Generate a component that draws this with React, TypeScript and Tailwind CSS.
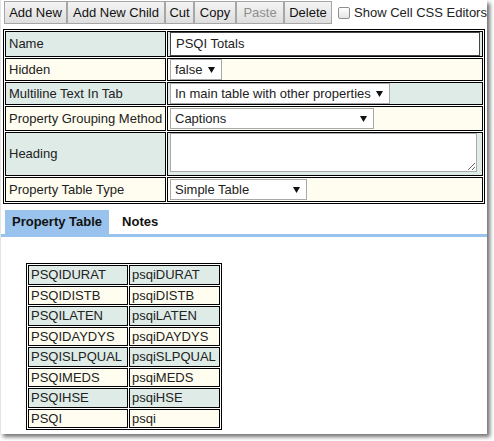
import { ReactNode } from "react";

const TEAL = "bg-[#deebe7]";
const CREAM = "bg-[#fffdef]";

function Arrow() {
  return (
    <svg width="7" height="6" viewBox="0 0 7 6" className="shrink-0">
      <polygon points="0,0 7,0 3.5,6" fill="#111" />
    </svg>
  );
}

function FakeSelect({ value, width }: { value: string; width: string }) {
  return (
    <div
      className={`${width} h-[21px] flex items-center justify-between pl-[4px] pr-[6px] bg-white border border-[#a9a9a9] text-[#222] leading-none whitespace-nowrap`}
    >
      <span>{value}</span>
      <Arrow />
    </div>
  );
}

function Row({
  label,
  bg,
  h,
  top,
  children,
}: {
  label: string;
  bg: string;
  h: string;
  top?: boolean;
  children: ReactNode;
}) {
  return (
    <tr>
      <td className={`${bg} ${h} border border-black pl-[3px] text-[#222] align-middle whitespace-nowrap`}>
        {label}
      </td>
      <td className={`${bg} ${h} border border-black px-[2px] ${top ? "align-top pt-0" : "align-middle"}`}>
        {children}
      </td>
    </tr>
  );
}

const buttons = [
  { label: "Add New", w: "w-[63px]" },
  { label: "Add New Child", w: "w-[98px]" },
  { label: "Cut", w: "w-[29px]" },
  { label: "Copy", w: "w-[42px]" },
  { label: "Paste", w: "w-[48px]", disabled: true },
  { label: "Delete", w: "w-[48px]" },
];

const vars = [
  ["PSQIDURAT", "psqiDURAT"],
  ["PSQIDISTB", "psqiDISTB"],
  ["PSQILATEN", "psqiLATEN"],
  ["PSQIDAYDYS", "psqiDAYDYS"],
  ["PSQISLPQUAL", "psqiSLPQUAL"],
  ["PSQIMEDS", "psqiMEDS"],
  ["PSQIHSE", "psqiHSE"],
  ["PSQI", "psqi"],
];

export default function App() {
  return (
    <div className="w-[494px] h-[441px] bg-white">
      <div className="w-[487px] h-[434px] bg-white overflow-hidden border-l border-[#e4e4e4] shadow-[3px_3px_4px_rgba(0,0,0,0.55)] font-['Liberation_Sans',Arial,sans-serif] text-[13px] text-[#222]">
        {/* toolbar */}
        <div className="flex items-center pl-[3px] pt-[1px] whitespace-nowrap">
          <div className="flex shrink-0">
            {buttons.map((b) => (
              <div
                key={b.label}
                className={`${b.w} h-[23px] flex items-center justify-center border border-[#a6a6a6] bg-gradient-to-b from-[#f4f4f4] to-[#dedede] ${
                  b.disabled ? "text-[#8f8f8f]" : "text-[#111]"
                }`}
              >
                {b.label}
              </div>
            ))}
          </div>
          <input
            type="checkbox"
            className="appearance-none shrink-0 ml-[6px] w-[12px] h-[12px] rounded-[2px] border border-[#8f8f8f] bg-gradient-to-b from-white to-[#e4e4e4]"
          />
          <span className="ml-[4px] text-[#222]">Show Cell CSS Editors</span>
        </div>

        {/* properties table */}
        <table className="mt-[5px] ml-[2px] border-separate border-spacing-[1px] border border-black w-[482px] table-fixed">
          <colgroup>
            <col className="w-[161px]" />
            <col />
          </colgroup>
          <tbody>
            <Row label="Name" bg={TEAL} h="h-[26px]">
              <div className="h-[24px] flex items-center px-[5px] bg-white border border-[#454545] text-[#222]">
                PSQI Totals
              </div>
            </Row>
            <Row label="Hidden" bg={CREAM} h="h-[23px]">
              <FakeSelect value="false" width="w-[52px]" />
            </Row>
            <Row label="Multiline Text In Tab" bg={TEAL} h="h-[23px]">
              <FakeSelect value="In main table with other properties" width="w-[220px]" />
            </Row>
            <Row label="Property Grouping Method" bg={CREAM} h="h-[25px]">
              <FakeSelect value="Captions" width="w-[204px]" />
            </Row>
            <Row label="Heading" bg={TEAL} h="h-[44px]" top>
              <textarea className="block w-[307px] h-[39px] bg-white border border-[#a9a9a9]" />
            </Row>
            <Row label="Property Table Type" bg={CREAM} h="h-[25px]">
              <FakeSelect value="Simple Table" width="w-[137px]" />
            </Row>
          </tbody>
        </table>

        {/* tabs */}
        <div className="mt-[6px] flex gap-[6px] pl-[4px] border-b-[3px] border-[#99c2ec]">
          <div className="h-[24px] px-[7px] flex items-center bg-[#99c2ec] font-bold text-[#111]">Property Table</div>
          <div className="h-[24px] px-[7px] flex items-center font-bold text-[#111]">Notes</div>
        </div>

        {/* variable table */}
        <div className="pt-[26px] pl-[25px]">
          <table className="border-separate border-spacing-[1px] border border-black">
            <tbody>
              {vars.map(([a, b], i) => {
                const bg = i % 2 === 0 ? TEAL : CREAM;
                return (
                  <tr key={a}>
                    <td className={`${bg} h-[19.5px] w-[100px] border border-black pl-[2px] leading-none whitespace-nowrap`}>{a}</td>
                    <td className={`${bg} h-[19.5px] w-[91px] border border-black pl-[2px] leading-none whitespace-nowrap`}>{b}</td>
                  </tr>
                );
              })}
            </tbody>
          </table>
        </div>
      </div>
    </div>
  );
}
